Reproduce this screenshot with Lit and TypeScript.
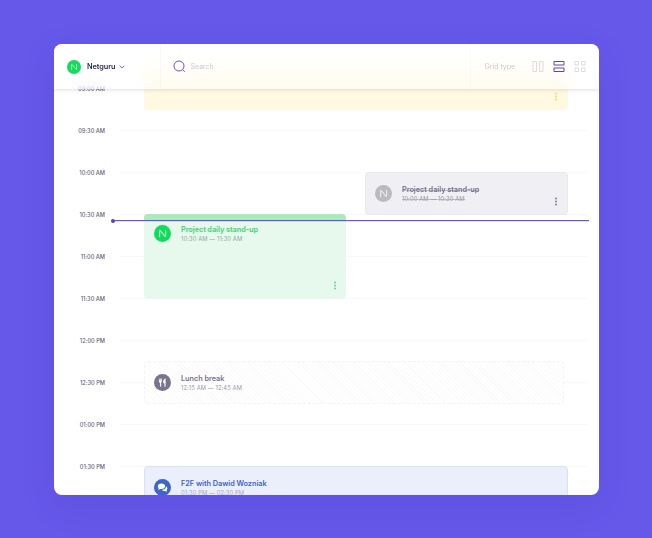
import { LitElement, html, css, svg, nothing } from "lit";
import { customElement, property } from "lit/decorators.js";

type IconName = "brand" | "food" | "chat";

interface CalendarEvent {
  kind: string;
  title?: string;
  time?: string;
  icon?: IconName;
  menu?: boolean;
}

const slots = [
  "09:00 AM", "09:30 AM", "10:00 AM", "10:30 AM", "11:00 AM",
  "11:30 AM", "12:00 PM", "12:30 PM", "01:00 PM", "01:30 PM",
];

const events: CalendarEvent[] = [
  { kind: "yellow", menu: true },
  { kind: "gray", title: "Project daily stand-up", time: "10:00 AM — 10:30 AM", icon: "brand", menu: true },
  { kind: "green", title: "Project daily stand-up", time: "10:30 AM — 11:30 AM", icon: "brand", menu: true },
  { kind: "lunch", title: "Lunch break", time: "12:15 AM — 12:45 AM", icon: "food" },
  { kind: "blue", title: "F2F with Dawid Wozniak", time: "01:30 PM — 02:30 PM", icon: "chat" },
];

const glyphs = {
  brand: svg`<path d="M5.6 11.7V6.1Q5.6 5 6.5 5.9L10.8 11Q11.6 11.9 11.6 10.8V5.2" fill="none" stroke="#fff" stroke-opacity=".68" stroke-width="1.15" stroke-linecap="round"/>`,
  food: svg`<g fill="#fff"><path d="M4.9 4.4H5.6V6.5H6V4.4H6.7V6.5H7.1V4.4H7.8V7.2Q7.8 8.3 7 8.7L7.3 12.4Q6.8 13 6.2 12.4L5.9 8.7Q4.9 8.3 4.9 7.2Z"/><path d="M11.6 4.2V12.5Q11 13 10.4 12.5V9.3H9.2Q8.7 5.2 11.6 4.2Z"/></g>`,
  chat: svg`<g fill="#fff"><path d="M7.5 4.5C5.3 4.5 3.8 5.7 3.8 7.3C3.8 8 4.1 8.7 4.7 9.2L4 10.5C5 10.5 5.7 10.2 6.1 9.9C8.9 10.5 11.2 9.1 11.2 7.3C11.2 5.7 9.7 4.5 7.5 4.5Z"/><path d="M11.9 7.2C12.3 9.2 10.5 10.8 7.8 10.9C8.6 11.8 9.9 12.1 11.1 11.9C11.6 12.3 12.3 12.6 13.2 12.6L12.5 11.2C13.9 9.9 13.6 8 11.9 7.2Z"/></g>`,
};

@customElement("round-icon")
class RoundIcon extends LitElement {
  @property() name: IconName = "brand";
  static styles = css`
    :host { display: block; flex: none; }
    svg { display: block; width: 100%; height: 100%; }
  `;
  render() {
    return html`<svg viewBox="0 0 17 17"><circle cx="8.5" cy="8.5" r="8.5" fill="currentColor"/>${glyphs[this.name]}</svg>`;
  }
}

@customElement("app-root")
class AppRoot extends LitElement {
  static styles = css`
    :host {
      display: flex; align-items: flex-start; box-sizing: border-box;
      width: 652px; height: 538px; padding: 44px 53px 0 54px;
      background: #6658e9; overflow: hidden;
      font-family: Inter, "Liberation Sans", sans-serif; color: #2e2b55;
    }
    .card {
      position: relative; width: 545px; height: 451px; overflow: hidden;
      background: #fff; border-radius: 8px;
    }
    .frame { border-radius: 8px; box-shadow: 0 10px 34px rgba(50, 40, 170, .12); }
    .header {
      position: absolute; inset: 0 0 auto; z-index: 3; height: 45px;
      display: grid; grid-template-columns: 106px 1fr 129px;
      background: linear-gradient(rgba(255,255,255,.97), rgba(255,255,255,.7) 60%, rgba(255,255,255,.45));
      backdrop-filter: blur(7px);
      box-shadow: 0 1px 4px rgba(60, 55, 90, .16);
    }
    .header > div { display: flex; align-items: center; box-sizing: border-box; }
    .team { padding-left: 13px; }
    .team round-icon { width: 14px; height: 14px; color: #11dc5b; }
    .name { margin-left: 6px; font-size: 7.3px; font-weight: 600; letter-spacing: -.05px; }
    .chevron { width: 6px; height: 4px; margin-left: 4px; }
    .search { border-left: 1px solid rgba(60,50,100,.03); padding-left: 12px; }
    .search svg { width: 13px; height: 13px; }
    .search span { margin: 0 0 0 4.5px; font-size: 7px; color: #cbc9d1; }
    .types { border-left: 1px solid rgba(60,50,100,.03); padding-left: 13.5px; }
    .types span { width: 47.5px; font-size: 7px; color: #cbc9ce; white-space: nowrap; }
    .types svg { width: 12px; height: 12px; margin: -1px 9px 0 0; flex: none; fill: none; stroke: #dddbe0; }
    .types .on { stroke: #5946b8; }

    .timeline {
      display: grid; box-sizing: border-box; height: 600px; padding-top: 2px;
      grid-template-columns: 65px 25px 202px 19px 203px 31px;
      grid-template-rows: repeat(24, 21px);
    }
    .label {
      grid-column: 1; align-self: start; justify-self: start; margin: -3.5px 0 0 24px;
      width: 27px; height: 8px; line-height: 8px; text-align: right;
      font-size: 5.7px; font-weight: 500; letter-spacing: -.02px; color: #65627c; white-space: nowrap;
    }
    .rule { grid-column: 2 / 7; height: 1px; margin-right: 12px; background: #f8f8fa; }
    .event {
      position: relative; display: flex; align-items: flex-start; box-sizing: border-box;
      border-radius: 4px; overflow: hidden;
    }
    .event round-icon { width: 17px; height: 17px; margin: 12px 0 0 10px; }
    .text { margin: 12px 0 0 10px; white-space: nowrap; }
    .title { font-size: 7.3px; line-height: 10px; font-weight: 600; letter-spacing: -.02px; }
    .time { font-size: 5.8px; line-height: 8px; letter-spacing: .1px; color: #9b9aaa; }
    .dots { position: absolute; right: 9.5px; bottom: 9.5px; width: 4px; height: 9px; }
    .yellow { grid-area: 1 / 3 / 4 / 6; margin: 12px 0 -1px; background: #fff9e2; color: #f1d86d; }
    .yellow .dots { right: 10px; bottom: 9.5px; }
    .gray { grid-area: 7 / 5 / 9 / 6; margin-bottom: -1px; background: #f0f0f4; border: 1px solid #e8e8ed; color: #74718c; }
    .gray round-icon { color: #bbbbbd; margin-left: 9px; }
    .gray .title, .gray .time {
      width: max-content;
      background: linear-gradient(rgba(116,113,140,.4), rgba(116,113,140,.4)) 0 5px / 100% 1px no-repeat;
    }
    .gray .time { color: #9897a4; background-position: 0 4px; }
    .gray .dots { right: 9px; bottom: 8.5px; }
    .green { grid-area: 9 / 3 / 13 / 4; margin-bottom: -1px; background: linear-gradient(#aae9c1 6px, #e7f8ed 6px); color: #51d582; }
    .green round-icon { margin-top: 11px; color: #10dc5c; }
    .green .text { margin-top: 11px; }
    .green .title { font-weight: 700; letter-spacing: -.08px; }
    .green .time { color: #8eaca4; }
    .lunch {
      grid-area: 16 / 3 / 18 / 6; margin: 0 4px -1px 0; border: 1px dashed #f4f4f6; color: #77748d;
      background: repeating-linear-gradient(45deg, #fff 0 2px, #fafafb 2px 3px);
    }
    .blue { grid-area: 21 / 3 / 25 / 6; background: #eaeffb; border: 1px solid #d9e1f5; color: #3b64cd; }
    .blue .time { color: #a5aac0; }
    .lunch round-icon, .blue round-icon { margin-left: 9px; }
    .now {
      grid-area: 9 / 1 / 10 / 7; z-index: 2; display: flex; align-items: center;
      height: 4px; margin: 4.5px 10px 0 56.5px;
    }
    .now::before { content: ""; width: 4px; height: 4px; border-radius: 50%; background: #5540bd; }
    .now::after { content: ""; flex: 1; height: 1px; background: #6b55c8; box-shadow: 0 1px 0 rgba(107,85,200,.2); }
  `;

  private eventView(e: CalendarEvent) {
    return html`<div class="event ${e.kind}">
      ${e.icon ? html`<round-icon .name=${e.icon}></round-icon>` : nothing}
      ${e.title ? html`<div class="text"><div class="title">${e.title}</div><div class="time">${e.time}</div></div>` : nothing}
      ${e.menu ? html`<svg class="dots" viewBox="0 0 4 9" fill="currentColor"><circle cx="2" cy="1.5" r=".9"/><circle cx="2" cy="4.5" r=".9"/><circle cx="2" cy="7.5" r=".9"/></svg>` : nothing}
    </div>`;
  }

  render() {
    return html`<div class="frame"><div class="card">
      <div class="header">
        <div class="team">
          <round-icon></round-icon><span class="name">Netguru</span>
          <svg class="chevron" viewBox="0 0 6 4"><path d="M.6.7 3 3.1 5.4.7" fill="none" stroke="#6f60bd" stroke-width=".95"/></svg>
        </div>
        <div class="search">
          <svg viewBox="0 0 13 13" fill="none" stroke="#6c55bd"><circle cx="6" cy="6" r="5"/><path d="m9.6 9.6 2.2 2.2"/></svg>
          <span>Search</span>
        </div>
        <div class="types">
          <span>Grid type</span>
          <svg viewBox="0 0 12 12"><path d="M1 1.5H4.5V11.5H1ZM7.5 1.5H11V11.5H7.5Z"/></svg>
          <svg class="on" viewBox="0 0 12 12"><path d="M1 1.5H11V5H1ZM1 8H11V11.5H1Z"/></svg>
          <svg viewBox="0 0 12 12"><path d="M1 1.5H4.5V5H1ZM7.5 1.5H11V5H7.5ZM1 8H4.5V11.5H1ZM7.5 8H11V11.5H7.5Z"/></svg>
        </div>
      </div>
      <div class="timeline">
        ${slots.map((s, i) => html`<div class="label" style="grid-row:${3 + i * 2}">${s}</div><div class="rule" style="grid-row:${3 + i * 2}"></div>`)}
        ${events.map((e) => this.eventView(e))}
        <div class="now"></div>
      </div>
    </div></div>`;
  }
}
